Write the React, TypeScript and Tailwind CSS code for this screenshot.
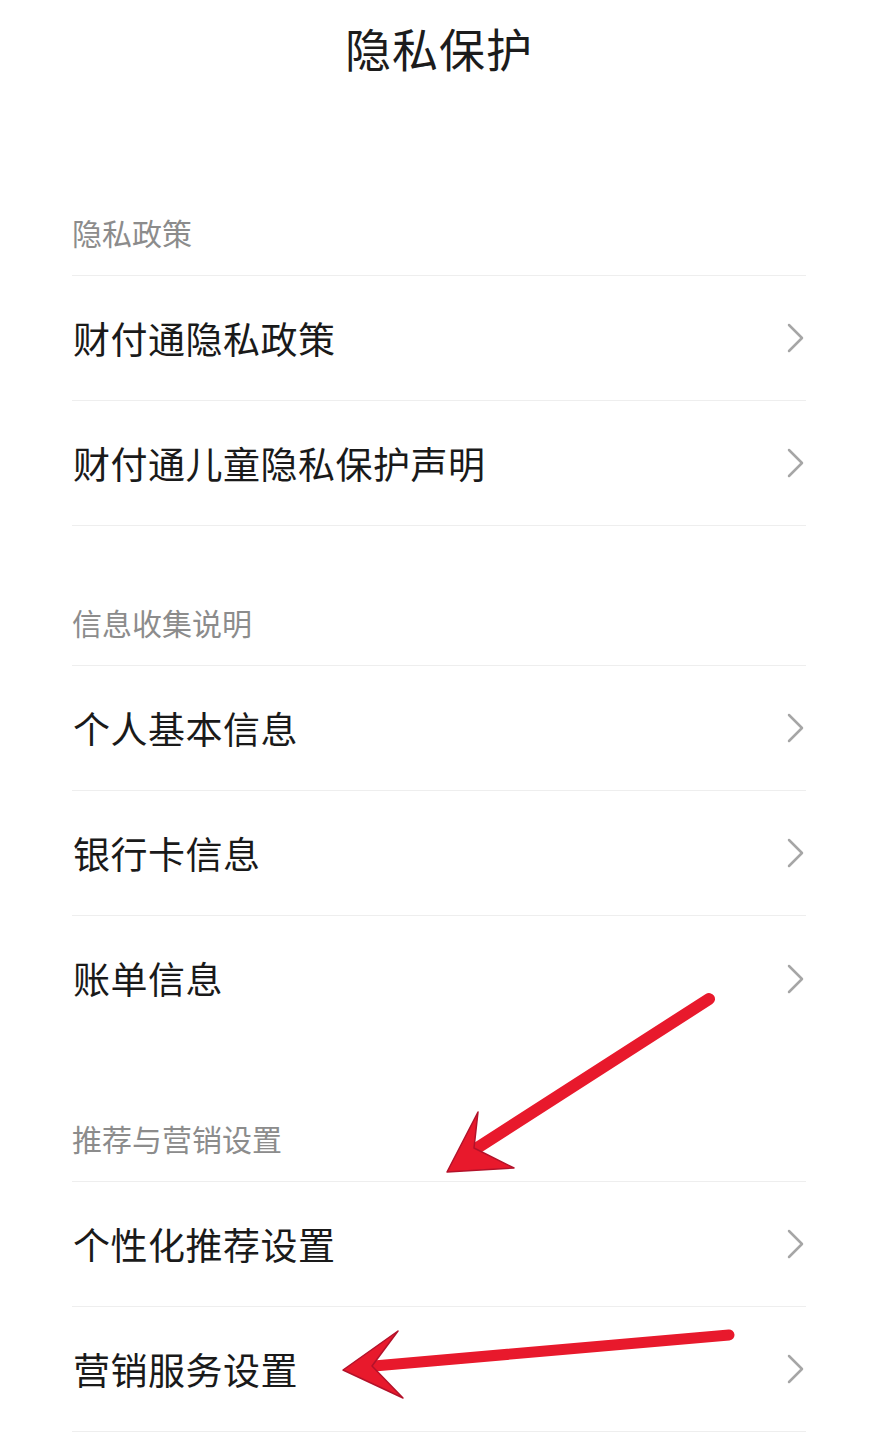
import React from 'react';

type Row = { label: string; divider?: boolean };
type Section = { title: string; headerH: string; rows: Row[] };

const sections: Section[] = [
    {
        title: '隐私政策',
        headerH: 'h-[180px]',
        rows: [
            { label: '财付通隐私政策', divider: true },
            { label: '财付通儿童隐私保护声明', divider: true },
        ],
    },
    {
        title: '信息收集说明',
        headerH: 'h-[140px]',
        rows: [
            { label: '个人基本信息', divider: true },
            { label: '银行卡信息', divider: true },
            { label: '账单信息', divider: false },
        ],
    },
    {
        title: '推荐与营销设置',
        headerH: 'h-[141px]',
        rows: [
            { label: '个性化推荐设置', divider: true },
            { label: '营销服务设置', divider: true },
        ],
    },
];

function Chevron() {
    return (
        <svg width="20" height="30" viewBox="0 0 20 30" className="shrink-0">
            <polyline
                points="3,2 16,15 3,28"
                fill="none"
                stroke="#a6a6a6"
                strokeWidth="2.5"
                strokeLinecap="round"
                strokeLinejoin="round"
            />
        </svg>
    );
}

function Arrows() {
    return (
        <svg
            className="absolute inset-0 pointer-events-none"
            width="878"
            height="1436"
            viewBox="0 0 878 1436"
        >
            {/* arrow pointing at 推荐与营销设置 */}
            <line x1="709" y1="999" x2="474" y2="1150" stroke="#e8192c" strokeWidth="12" strokeLinecap="round" />
            <polygon
                points="447,1172 478,1112 474,1148 514,1168"
                fill="#e8192c"
                stroke="#b3122a"
                strokeWidth="1.5"
                strokeLinejoin="round"
            />
            {/* arrow pointing at 营销服务设置 */}
            <line x1="729" y1="1335" x2="374" y2="1366" stroke="#e8192c" strokeWidth="11" strokeLinecap="round" />
            <polygon
                points="343,1370 398,1331 372,1366 403,1398"
                fill="#e8192c"
                stroke="#b3122a"
                strokeWidth="1.5"
                strokeLinejoin="round"
            />
        </svg>
    );
}

export default function App() {
    return (
        <div
            className="relative w-[878px] h-[1436px] overflow-hidden bg-white"
            style={{ fontFamily: '"Noto Sans CJK SC", "Noto Sans", sans-serif' }}
        >
            <div className="h-[96px] flex items-center justify-center pb-[2px]">
                <h1 className="text-[46px] leading-none font-normal text-[#1c1c1c] tracking-[1px]">隐私保护</h1>
            </div>

            <div className="mx-[72px]">
                {sections.map((section) => (
                    <div key={section.title}>
                        <div className={`${section.headerH} flex items-end pb-[28px] border-b border-[#eeeeee]`}>
                            <span className="text-[30px] leading-[30px] text-[#8c8c8c]">{section.title}</span>
                        </div>
                        {section.rows.map((row) => (
                            <div
                                key={row.label}
                                className={
                                    row.divider
                                        ? 'h-[125px] flex items-center justify-between border-b border-[#eeeeee]'
                                        : 'h-[125px] flex items-center justify-between'
                                }
                            >
                                <span className="text-[37px] leading-none text-[#1a1a1a] tracking-[0.5px] pl-[1px]">
                                    {row.label}
                                </span>
                                <Chevron />
                            </div>
                        ))}
                    </div>
                ))}
            </div>

            <Arrows />
        </div>
    );
}
